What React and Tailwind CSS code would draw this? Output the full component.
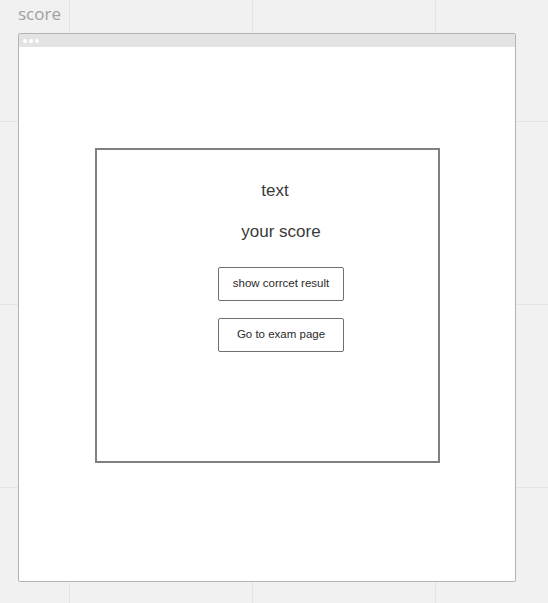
export default function App() {
  return (
    <div className="w-[548px] h-[603px] bg-[#f1f1f1] bg-[linear-gradient(to_right,#e4e4e4_1px,transparent_1px),linear-gradient(to_bottom,#e4e4e4_1px,transparent_1px)] bg-[size:183px_183px] bg-[position:69px_121px] overflow-hidden font-['Liberation_Sans',Arial,sans-serif]">
      <div className="h-[33px] pl-[18px] pt-[2px] font-['Open_Sans',sans-serif] text-[17px] leading-[24px] text-[#a0a0a0]">
        score
      </div>
      <div className="ml-[18px] w-[498px] h-[549px] border border-[#b3b3b3] rounded-[2px] bg-white flex flex-col">
        <div className="h-[13px] bg-[#e3e3e3] flex items-center gap-[2px] pl-[4px]">
          <span className="w-[4px] h-[4px] rounded-full bg-white" />
          <span className="w-[4px] h-[4px] rounded-full bg-white" />
          <span className="w-[4px] h-[4px] rounded-full bg-white" />
        </div>
        <div className="pt-[101px] pl-[76px]">
          <div className="w-[345px] h-[315px] border-2 border-[#808080] flex flex-col items-center pl-[27px]">
            <div className="mt-[31px] mr-[12px] text-[17px] leading-[20px] text-[#3a3a3a]">text</div>
            <div className="mt-[21px] text-[17px] leading-[20px] text-[#3a3a3a]">your score</div>
            <button className="mt-[25px] w-[126px] h-[34px] border border-[#707070] rounded-[2px] bg-white text-[11.5px] text-[#2a2a2a]">
              show corrcet result
            </button>
            <button className="mt-[17px] w-[126px] h-[34px] border border-[#707070] rounded-[2px] bg-white text-[11.5px] text-[#2a2a2a]">
              Go to exam page
            </button>
          </div>
        </div>
      </div>
    </div>
  );
}
